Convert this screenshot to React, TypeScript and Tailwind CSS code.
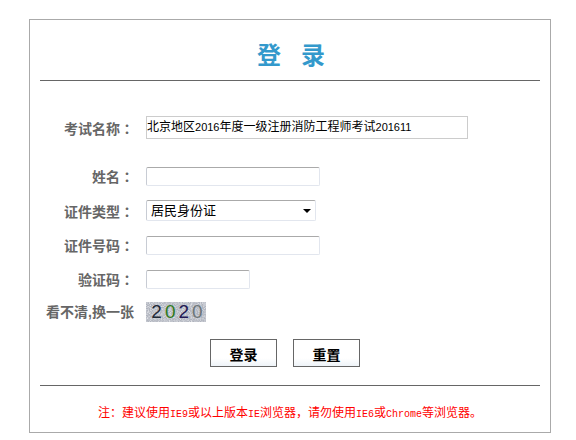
import React from 'react';

const labelCls = "block h-[20px] w-[94px] shrink-0 text-right text-[14px] leading-[20px] font-bold text-[#666666] whitespace-nowrap";
const inputCls = "block h-[19px] rounded-[2px] border border-[#e2e6ee] border-t-[#aaaaaa] border-l-[#c8ccd4] bg-white";
const latinCls = "font-['Liberation_Mono'] text-[10px]";
const btnCls = "w-[67px] h-[28px] border border-[#666666] bg-linear-to-b from-white from-70% to-[#eef3f8] pt-[3px] text-[14px] leading-[20px] font-bold text-black";

const Row = ({ label, className, children }: { label: string; className: string; children: React.ReactNode }) => (
  <div className={`flex items-center ${className}`}>
    <span className={labelCls}>
      {label}
      <span className="font-['Noto_Sans_CJK_TC']">：</span>
    </span>
    <div className="ml-[12px]">{children}</div>
  </div>
);

const App = () => {
  return (
    <div className="w-[576px] h-[440px] bg-white overflow-hidden pt-[19px] pl-[29px] font-['Liberation_Sans','Noto_Sans_CJK_SC',sans-serif]">
      <div className="w-[522px] h-[414px] border border-[#aaaaaa] px-[10px]">
        {/* Title */}
        <h1 className="flex h-[61px] justify-center gap-[20px] border-b border-[#666666] pt-[18px] pl-[2px] text-[24px] leading-[36px] font-bold text-[#3399cc]">
          <span>登</span>
          <span>录</span>
        </h1>

        <Row label="考试名称" className="mt-[35px]">
          <div className="w-[322px] h-[23px] border border-[#cccccc] bg-white text-[12px] leading-[21px] text-black whitespace-nowrap">
            北京地区<span className="text-[11px]">2016</span>年度一级注册消防工程师考试<span className="text-[11px]">201611</span>
          </div>
        </Row>

        <Row label="姓名" className="mt-[27px]">
          <input className={`${inputCls} w-[174px]`} />
        </Row>

        <Row label="证件类型" className="mt-[14px]">
          <div className="relative w-[170px] h-[21px]">
            <select className="block w-full h-full appearance-none rounded-[2px] border border-[#e2e6ee] border-t-[#aaaaaa] border-l-[#c8ccd4] bg-white pl-[4px] pb-[2px] text-[13px] text-black outline-none">
              <option>居民身份证</option>
            </select>
            <span className="absolute left-[157px] top-[9px] border-x-[4px] border-t-[4px] border-x-transparent border-t-black" />
          </div>
        </Row>

        <Row label="证件号码" className="mt-[14px]">
          <input className={`${inputCls} w-[174px]`} />
        </Row>

        <Row label="验证码" className="mt-[14px]">
          <input className={`${inputCls} w-[104px]`} />
        </Row>

        <div className="flex items-center mt-[13px]">
          <span className={labelCls}>看不清,换一张</span>
          <div className="relative ml-[12px] flex h-[20px] w-[60px] items-center justify-center gap-[3px] overflow-hidden bg-[#b0b4be] pl-[2px] text-[19px] leading-[20px]">
            {/* captcha noise */}
            <svg className="absolute inset-0" width="60" height="20">
              <filter id="captcha-noise">
                <feTurbulence type="fractalNoise" baseFrequency="0.9" numOctaves="2" seed="4" />
                <feColorMatrix values="0 0 0 0 0.8  0 0 0 0 0.81  0 0 0 0 0.84  1.8 0 0 0 -0.6" />
              </filter>
              <rect width="60" height="20" filter="url(#captcha-noise)" />
            </svg>
            <span className="relative text-[#1f2a38]">2</span>
            <span className="relative text-[#2f7a20]">0</span>
            <span className="relative text-[#231a55]">2</span>
            <span className="relative text-[#6d7678]">0</span>
          </div>
        </div>

        {/* Buttons */}
        <div className="flex ml-[170px] gap-[16px] mt-[17px]">
          <button className={btnCls}>登录</button>
          <button className={btnCls}>重置</button>
        </div>

        <div className="mt-[18px] border-t border-[#666666] pt-[19px] text-center text-[12px] leading-[16px] text-[#ff0000]">
          注：建议使用<span className={latinCls}>IE9</span>或以上版本<span className={latinCls}>IE</span>浏览器，请勿使用<span className={latinCls}>IE6</span>或<span className={latinCls}>Chrome</span>等浏览器。
        </div>
      </div>
    </div>
  );
};

export default App;
